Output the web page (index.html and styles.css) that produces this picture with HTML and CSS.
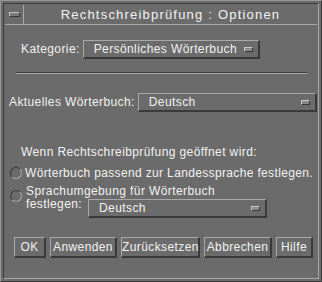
FILE: index.html
```html
<!DOCTYPE html>
<html lang="de">
<head>
    <meta charset="UTF-8">
    <title>Rechtschreibprüfung : Optionen</title>
    <link rel="stylesheet" href="styles.css">
</head>
<body>
    <div class="window">
        <div class="frame">
            <!-- title bar with the window menu button -->
            <div class="titlebar">
                <div class="menu-btn"><span class="menu-glyph"></span></div>
                <div class="title">Rechtschreibprüfung : Optionen</div>
            </div>

            <div class="content">
                <div class="category">
                    <span class="label">Kategorie:</span>
                    <div class="option cat-option">
                        <span>Persönliches Wörterbuch</span>
                        <span class="indicator"></span>
                    </div>
                </div>

                <div class="sep"></div>

                <div class="current">
                    <span class="label">Aktuelles Wörterbuch:</span>
                    <div class="option cur-option">
                        <span>Deutsch</span>
                        <span class="indicator"></span>
                    </div>
                </div>

                <div class="heading">Wenn Rechtschreibprüfung geöffnet wird:</div>

                <div class="radio-row first">
                    <span class="radio"></span>
                    <span class="radio-text">Wörterbuch passend zur Landessprache festlegen.</span>
                </div>

                <div class="radio-row second">
                    <span class="radio"></span>
                    <div class="radio-text">
                        <div>Sprachumgebung für Wörterbuch</div>
                        <div class="locale-line">
                            <span>festlegen:</span>
                            <div class="option loc-option">
                                <span>Deutsch</span>
                                <span class="indicator"></span>
                            </div>
                        </div>
                    </div>
                </div>

                <div class="buttons">
                    <button class="btn ok">OK</button>
                    <button class="btn apply">Anwenden</button>
                    <button class="btn reset">Zurücksetzen</button>
                    <button class="btn cancel">Abbrechen</button>
                    <button class="btn help">Hilfe</button>
                </div>
            </div>
        </div>
    </div>
</body>
</html>
```

FILE: styles.css
```css
body {
    margin: 0;
    background-color: #6b6b6b;
    font-family: "Liberation Sans", Arial, sans-serif;
    font-size: 12px;
    line-height: 13px;
    color: #f2f2f2;
    letter-spacing: 0.4px;
}
.window {
    width: 322px;
    height: 282px;
    box-sizing: border-box;
    background-color: #6b6b6b;
    border: 1px solid #3a3a3a;
    border-top-color: #9a9a9a;
    border-left-color: #9a9a9a;
    padding: 2px;
}
.frame {
    height: 100%;
    box-sizing: border-box;
    display: flex;
    flex-direction: column;
    border: 1px solid #a8a8a8;
    border-top-color: #3a3a3a;
    border-left-color: #3a3a3a;
}
.titlebar {
    display: flex;
    height: 19px;
    margin: 1px 1px 0 1px;
    border-bottom: 1px solid #a8a8a8;
}
.menu-btn {
    width: 18px;
    display: flex;
    align-items: center;
    justify-content: center;
    border-right: 1px solid #a8a8a8;
}
.menu-glyph {
    width: 9px;
    height: 3px;
    background-color: #7a7a7a;
    border: 1px solid #c0c0c0;
    border-right-color: #3a3a3a;
    border-bottom-color: #3a3a3a;
}
.title {
    flex: 1;
    text-align: center;
    font-size: 13px;
    letter-spacing: 1.2px;
    line-height: 19px;
}
.content {
    flex: 1;
    display: flex;
    flex-direction: column;
    padding: 0 4px 0 5px;
}
.category {
    display: flex;
    align-items: center;
    margin: 15px 0 0 12px;
}
.label {
    white-space: nowrap;
    margin-right: 3px;
}
.option {
    flex: none;
    display: flex;
    align-items: center;
    justify-content: space-between;
    box-sizing: border-box;
    height: 19px;
    padding: 0 5px 0 10px;
    white-space: nowrap;
    border: 1px solid #a8a8a8;
    border-right: 2px solid #3a3a3a;
    border-bottom: 2px solid #3a3a3a;
}
.cat-option {
    width: 177px;
}
.cur-option,
.loc-option {
    width: 179px;
}
.indicator {
    width: 7px;
    height: 3px;
    background-color: #8a8a8a;
    border: 1px solid #c8c8c8;
    border-right-color: #3a3a3a;
    border-bottom-color: #3a3a3a;
}
.sep {
    height: 0;
    margin: 13px 7px 0 7px;
    border-top: 1px solid #3a3a3a;
    border-bottom: 1px solid #a8a8a8;
}
.current {
    display: flex;
    align-items: center;
    justify-content: space-between;
    margin-top: 19px;
}
.heading {
    margin: 34px 0 0 12px;
}
.radio-row {
    display: flex;
    align-items: flex-start;
}
.radio-row.first {
    margin-top: 8px;
}
.radio-row.first .radio-text {
    white-space: nowrap;
    letter-spacing: 0.35px;
}
.radio-row.second {
    margin-top: 5px;
}
.radio {
    flex: none;
    box-sizing: border-box;
    width: 12px;
    height: 12px;
    margin: 0 3px 0 1px;
    border-radius: 50%;
    border: 1px solid #a8a8a8;
    border-top-color: #3a3a3a;
    border-left-color: #3a3a3a;
}
.radio-row.second .radio {
    margin-top: 5px;
    margin-right: 4px;
}
.locale-line {
    display: flex;
    align-items: flex-start;
}
.loc-option {
    margin: 1px 0 0 6px;
}
.buttons {
    display: flex;
    gap: 4px;
    margin: 19px 0 0 5px;
}
.btn {
    box-sizing: border-box;
    height: 21px;
    padding: 0;
    font-family: inherit;
    font-size: 12px;
    letter-spacing: 0.4px;
    color: #f2f2f2;
    background-color: #6b6b6b;
    border: 1px solid #a8a8a8;
    border-right: 2px solid #3a3a3a;
    border-bottom: 2px solid #3a3a3a;
}
.btn.ok {
    width: 32px;
}
.btn.apply {
    width: 67px;
}
.btn.reset {
    width: 79px;
}
.btn.cancel {
    width: 68px;
}
.btn.help {
    width: 37px;
}
```
